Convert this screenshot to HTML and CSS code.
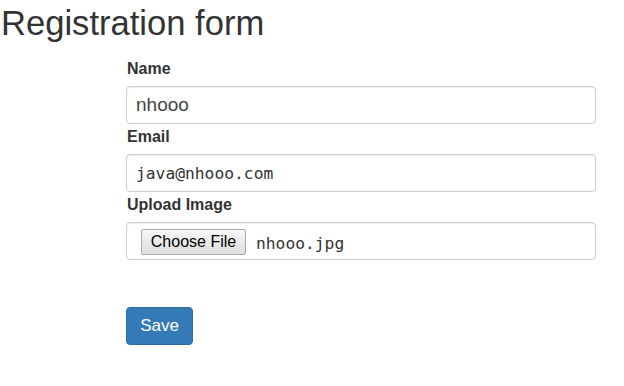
FILE: index.html
```html
<!DOCTYPE html>
<html>
<head>
<meta charset="utf-8">
<link rel="stylesheet" href="styles.css">
</head>
<body>
<h1 class="title">Registration form</h1>
<form class="form">
  <div class="group">
    <label class="label">Name</label>
    <div class="control">nhooo</div>
  </div>
  <div class="group">
    <label class="label">Email</label>
    <div class="control mono">java@nhooo.com</div>
  </div>
  <div class="group">
    <label class="label">Upload Image</label>
    <div class="control file">
      <span class="file-btn">Choose File</span>
      <span class="mono file-name">nhooo.jpg</span>
    </div>
  </div>
  <button type="button" class="save">Save</button>
</form>
</body>
</html>
```
FILE: styles.css
```css
html, body {
  margin: 0;
  padding: 0;
  background: #fff;
}
body {
  font-family: "Liberation Sans", Arial, sans-serif;
  color: #333;
}
.title {
  margin: 4px 0 0 1px;
  font-size: 34.6px;
  font-weight: normal;
  line-height: 38px;
  color: #333;
}
.form {
  margin: 19px 0 0 126px;
  width: 470px;
  display: flex;
  flex-direction: column;
}
.group {
  display: flex;
  flex-direction: column;
  margin-bottom: 5px;
}
.label {
  font-size: 16px;
  font-weight: bold;
  line-height: 16px;
  margin-bottom: 9px;
  margin-left: 1px;
}
.control {
  box-sizing: border-box;
  height: 38px;
  border: 1px solid #ccc;
  border-radius: 4px;
  box-shadow: inset 0 1px 1px rgba(0,0,0,.075);
  padding: 0 9px;
  display: flex;
  align-items: center;
  font-size: 19px;
  color: #444;
}
.mono {
  font-family: "DejaVu Sans Mono", monospace;
  font-size: 16.3px;
  color: #333;
}
.file {
  padding-left: 14px;
}
.file-btn {
  box-sizing: border-box;
  height: 26px;
  width: 105px;
  display: inline-flex;
  align-items: center;
  justify-content: center;
  font-family: "Liberation Sans", Arial, sans-serif;
  font-size: 16px;
  color: #000;
  background: linear-gradient(#f6f6f6, #dedede);
  border: 1px solid #a9a9a9;
  border-radius: 2px;
  margin-top: 2px;
}
.file-name {
  margin-left: 10px;
  margin-top: 4px;
}
.save {
  align-self: flex-start;
  margin-top: 42px;
  height: 38px;
  width: 67px;
  background: #337ab7;
  border: 1px solid #2e6da4;
  border-radius: 4px;
  color: #fff;
  font-family: "Liberation Sans", Arial, sans-serif;
  font-size: 17px;
  padding: 0;
}
```
